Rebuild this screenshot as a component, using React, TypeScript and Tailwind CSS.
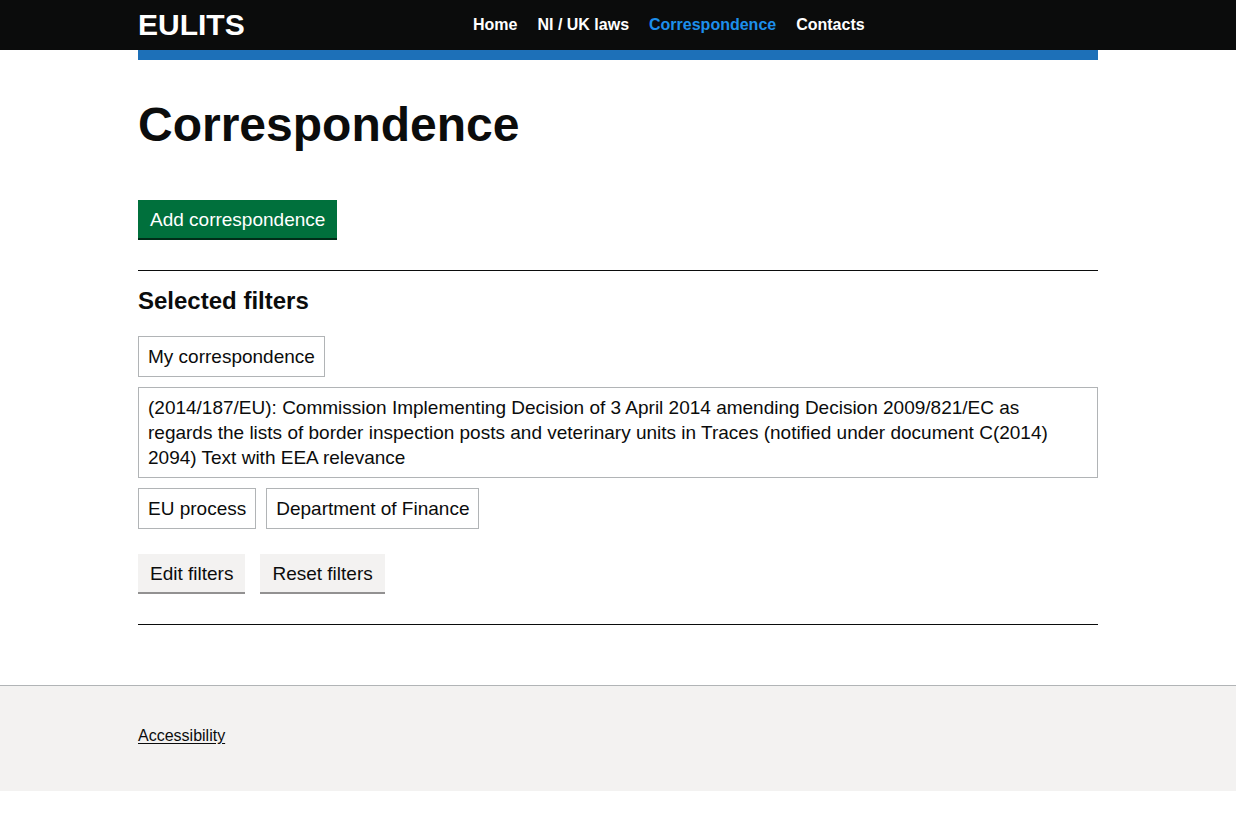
const NAV = [
  { label: 'Home', active: false },
  { label: 'NI / UK laws', active: false },
  { label: 'Correspondence', active: true },
  { label: 'Contacts', active: false },
]

const FILTERS_ROWS: string[][] = [
  ['My correspondence'],
  [
    '(2014/187/EU): Commission Implementing Decision of 3 April 2014 amending Decision 2009/821/EC as regards the lists of border inspection posts and veterinary units in Traces (notified under document C(2014) 2094) Text with EEA relevance',
  ],
  ['EU process', 'Department of Finance'],
]

function FilterTag({ text }: { text: string }) {
  return (
    <div className="border border-[#b1b4b6] px-[9px] py-[7px] text-[19px] leading-[25px] text-[#0b0c0c]">
      {text}
    </div>
  )
}

function GreyButton({ children }: { children: string }) {
  return (
    <button className="h-[38px] bg-[#f3f2f1] px-[12px] text-[19px] leading-none text-[#0b0c0c] shadow-[0_2px_0_#929191]">
      {children}
    </button>
  )
}

export default function App() {
  return (
    <div className="min-h-[823px] bg-white font-['Liberation_Sans',Arial,sans-serif] text-[#0b0c0c]">
      {/* header */}
      <header className="h-[50px] bg-[#0b0c0c]">
        <div className="mx-auto flex h-full w-[960px] items-center">
          <div className="w-[320px] text-[30px] font-bold leading-none text-white">EULITS</div>
          <nav className="flex gap-[20px] pl-[15px] text-[16px] font-bold leading-5">
            {NAV.map((n) => (
              <a key={n.label} className={n.active ? 'text-[#1d8feb]' : 'text-white'}>
                {n.label}
              </a>
            ))}
          </nav>
        </div>
      </header>

      <div className="mx-auto w-[960px]">
        <div className="h-[10px] bg-[#1d70b8]" />

        <main className="pt-[40px]">
          <h1 className="mb-[50px] text-[48px] font-bold leading-[50px]">Correspondence</h1>

          <button className="h-[38px] bg-[#00703c] px-[12px] text-[19px] leading-none text-white shadow-[0_2px_0_#002d18]">
            Add correspondence
          </button>

          <hr className="mt-[32px] border-t border-[#0b0c0c]" />

          <h2 className="mt-[15px] mb-[20px] text-[24px] font-bold leading-[30px]">Selected filters</h2>

          <div className="flex flex-col gap-[10px]">
            {FILTERS_ROWS.map((row, i) => (
              <div key={i} className="flex gap-[10px]">
                {row.map((t) => (
                  <FilterTag key={t} text={t} />
                ))}
              </div>
            ))}
          </div>

          <div className="mt-[25px] flex gap-[15px]">
            <GreyButton>Edit filters</GreyButton>
            <GreyButton>Reset filters</GreyButton>
          </div>

          <hr className="mt-[32px] border-t border-[#0b0c0c]" />
        </main>
      </div>

      <footer className="mt-[60px] border-t border-[#b1b4b6] bg-[#f3f2f1] pt-[38px] pb-[43px]">
        <div className="mx-auto w-[960px]">
          <a className="text-[16px] leading-5 text-[#0b0c0c] underline underline-offset-2">Accessibility</a>
        </div>
      </footer>
    </div>
  )
}
